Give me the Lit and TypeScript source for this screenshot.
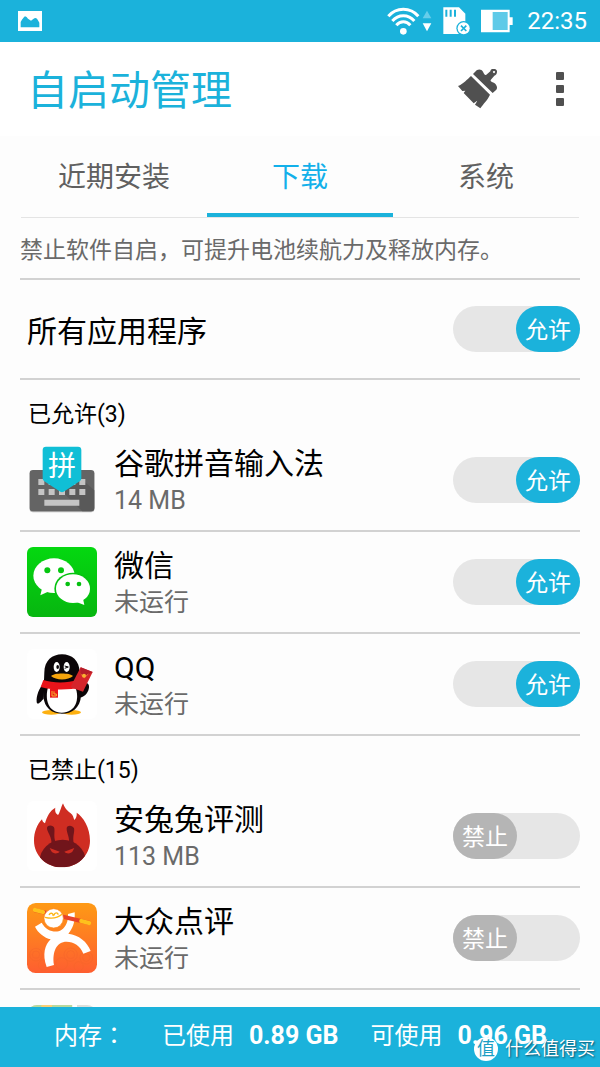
import { LitElement, html, svg, css, nothing } from 'lit';
import { customElement, property, state } from 'lit/decorators.js';

type IconName = 'ime' | 'wechat' | 'qq' | 'antutu' | 'dianping' | 'map';

interface AppEntry {
  id: string;
  name: string;
  status: string;
  icon: IconName;
  allowed: boolean;
}

const icons = {
  ime: svg`<svg viewBox="80 498 210 210" aria-hidden="true">
    <rect x="88" y="576" width="194" height="124" rx="10" fill="#b9b9b9"/>
    <rect x="88" y="573" width="194" height="124" rx="10" fill="#646464"/>
    <path d="M186 638 L243 600 L282 634 V687 a10 10 0 0 1-10 10 H246Z" fill="#595959"/>
    <g fill="#c4c4c4">
      <path d="M114 600h18v18h-18zM145 600h18v18h-18zM207 600h18v18h-18zM237 600h18v18h-18z"/>
      <path d="M114 630h18v18h-18zM145 630h18v18h-18zM176 630h18v18h-18zM207 630h18v18h-18zM237 630h18v18h-18z"/>
      <path d="M132 662h105v18H132z"/>
    </g>
    <path d="M137 503 H233 a10 10 0 0 1 10 10 V598 a10 10 0 0 1-5 9 L190 638 a10 10 0 0 1-10 0 L132 607 a10 10 0 0 1-5-9 V513 a10 10 0 0 1 10-10Z" fill="#10bfd6"/>
    <text x="185" y="590" text-anchor="middle" font-size="84" fill="#fff" font-family="'Noto Sans CJK SC', sans-serif">拼</text>
  </svg>`,
  wechat: svg`<svg viewBox="80 50 210 210" aria-hidden="true">
    <defs><linearGradient id="wx" x1="0" y1="0" x2="0" y2="1"><stop offset="0" stop-color="#04d810"/><stop offset="1" stop-color="#07b610"/></linearGradient></defs>
    <rect x="80" y="50" width="210" height="210" rx="18" fill="url(#wx)"/>
    <ellipse cx="161" cy="136" rx="62" ry="52" fill="#fff"/>
    <path d="M126 170 L120 195 L148 182Z" fill="#fff"/>
    <circle cx="141" cy="120" r="9" fill="#05c610"/><circle cx="182" cy="120" r="9" fill="#05c610"/>
    <ellipse cx="218" cy="175" rx="56" ry="48" fill="#05c310"/>
    <ellipse cx="218" cy="175" rx="51" ry="43" fill="#fff"/>
    <path d="M228 215 L252 224 L247 200Z" fill="#fff"/>
    <circle cx="202" cy="161" r="7" fill="#05c010"/><circle cx="236" cy="161" r="7" fill="#05c010"/>
  </svg>`,
  qq: svg`<svg viewBox="80 355 210 210" aria-hidden="true">
    <rect x="80" y="355" width="210" height="210" rx="20" fill="#fff"/>
    <ellipse cx="153" cy="545" rx="28" ry="7" fill="#fdb010"/><ellipse cx="214" cy="545" rx="28" ry="7" fill="#fdb010"/>
    <path d="M132 455 C116 473 107 496 109 514 C111 526 122 512 130 504Z" fill="#0b0608"/>
    <path d="M236 482 C252 476 249 460 258 456 C271 460 266 478 260 487 C253 497 242 502 236 500Z" fill="#0b0608"/>
    <path d="M132 425 C132 390 156 371 185 371 C214 371 238 390 238 425 C238 450 244 470 242 495 C240 532 214 549 185 549 C154 549 132 532 129 497 C127 474 132 452 132 425Z" fill="#0b0608"/>
    <path d="M144 466 H224 C240 505 226 546 184 546 C143 546 132 505 144 466Z" fill="#fff"/>
    <ellipse cx="169" cy="409" rx="9" ry="15" fill="#fff"/><ellipse cx="199" cy="409" rx="9" ry="15" fill="#fff"/>
    <ellipse cx="172" cy="409" rx="4" ry="6" fill="#0b0608"/>
    <path d="M193 406 L204 409 L193 413" stroke="#0b0608" stroke-width="3" fill="none"/>
    <path d="M152 436 C162 426 208 426 218 436 C204 450 166 450 152 436Z" fill="#f6a40c"/>
    <path d="M129 448 C158 458 205 458 230 447 L240 469 C208 480 148 478 121 469Z" fill="#e9141a"/>
    <path d="M149 474 H173 V501 H149Z" fill="#e9141a"/>
    <path d="M155 481 V496 H168 V490 H161 V482" stroke="#f8b62c" stroke-width="3" fill="none"/>
    <path d="M241 410 L277 424 L248 483 L210 470Z" fill="#d5252b"/>
    <path d="M241 410 L277 424 L254 437 L240 431Z" fill="#b51d2a"/>
    <path d="M241 430 L252 441 L264 430" stroke="#f6a92c" stroke-width="2" fill="none"/><circle cx="251" cy="435" r="6" fill="#f9b233"/>
  </svg>`,
  antutu: svg`<svg viewBox="80 183 210 210" aria-hidden="true">
    <rect x="80" y="183" width="210" height="210" rx="20" fill="#fff"/>
    <defs><clipPath id="flame"><path d="M185 382 C139 382 101 347 101 302 C101 276 110 254 125 238 C126 244 129 248 134 250 C140 228 150 211 165 203 C163 214 166 221 173 225 C178 221 181 204 188 190 C194 208 204 214 211 220 C219 226 219 234 222 240 C228 234 230 226 229 218 C248 230 269 262 269 302 C269 347 231 382 185 382Z"/></clipPath></defs>
    <g clip-path="url(#flame)">
      <rect x="95" y="185" width="180" height="200" fill="#cf2d22"/>
      <ellipse cx="187" cy="363" rx="69" ry="64" fill="#71151b"/>
      <path d="M153 316 C157 290 138 274 140 263 C142 254 160 255 162 265 C164 278 158 292 168 312ZM205 312 C210 292 198 280 199 264 C201 254 217 255 221 265 C224 276 215 290 221 313Z" fill="#71151b"/>
    </g>
    <path d="M148 324 L178 335 C172 342 159 342 153 334ZM222 324 L192 335 C198 342 211 342 217 334Z" fill="#cf2d22"/>
  </svg>`,
  dianping: svg`<svg viewBox="80 486 210 210" aria-hidden="true">
    <defs><linearGradient id="dp" x1="0" y1="0" x2="0" y2="1"><stop offset="0" stop-color="#fe9a15"/><stop offset="1" stop-color="#fe5e30"/></linearGradient></defs>
    <rect x="80" y="486" width="210" height="210" rx="26" fill="url(#dp)"/>
    <g fill="none" stroke="#f5652a" stroke-width="2" opacity="0.6">
      <circle cx="107" cy="641" r="19"/><circle cx="107" cy="641" r="11"/><circle cx="211" cy="641" r="20"/><circle cx="211" cy="641" r="12"/>
      <circle cx="258" cy="650" r="19"/><circle cx="258" cy="650" r="11"/><circle cx="184" cy="668" r="18"/><circle cx="130" cy="672" r="16"/><circle cx="235" cy="676" r="14"/>
    </g>
    <path d="M104 557 L124 545 C138 570 166 578 183 567 C198 557 204 540 203 519 L223 514 C225 543 217 563 204 578 C235 582 261 602 271 630 L249 638 C240 614 220 602 199 602 C168 602 155 633 161 672 L139 678 C125 640 134 611 151 595 C132 590 113 576 104 557Z" fill="#fff"/>
    <path d="M101 507 L268 546" stroke="#e8432a" stroke-width="12"/>
    <path d="M104 507 L128 513" stroke="#fec11c" stroke-width="13" stroke-linecap="round"/>
    <path d="M243 540 L266 546" stroke="#fec11c" stroke-width="13" stroke-linecap="round"/>
    <circle cx="160" cy="532" r="29" fill="#fff" stroke="#fe8a1c" stroke-width="2"/>
    <path d="M134 529 C150 533 170 533 185 520 M146 522 C151 513 160 517 158 525 M161 523 C163 513 173 514 173 521" fill="none" stroke="#fdb515" stroke-width="4"/>
  </svg>`,
  map: svg`<svg viewBox="0 0 210 210" aria-hidden="true">
    <defs><clipPath id="mapbox"><rect width="210" height="210" rx="30"/></clipPath></defs>
    <g clip-path="url(#mapbox)"><rect width="210" height="210" fill="#dedfda"/><path d="M0 0H136V90H0Z" fill="#b9d89c"/><path d="M43 0H75V210H43Z" fill="#fbcf74"/><path d="M136 0H150V210H136Z" fill="#fff"/></g>
  </svg>`,
};

@customElement('app-switch')
class AppSwitch extends LitElement {
  @property({ type: Boolean }) on = false;
  @property() name = '';

  static styles = css`
    :host { display: block; flex: none; }
    .track {
      display: grid;
      align-items: center;
      width: 127px;
      height: 46px;
      border-radius: 23px;
      background: #e6e6e6;
      cursor: pointer;
    }
    .box, .knob { grid-area: 1 / 1; }
    .box { appearance: none; width: 100%; height: 100%; margin: 0; border-radius: 23px; cursor: pointer; }
    .box:focus-visible { outline: 2px solid #1a8fb0; }
    .knob {
      justify-self: start;
      width: 64px;
      padding-top: 4px;
      border-radius: 23px;
      background: #b5b5b5;
      color: #fff;
      font-size: 23px;
      line-height: 42px;
      text-align: center;
      pointer-events: none;
    }
    .box:checked + .knob { justify-self: end; background: #1bb2db; }
  `;

  render() {
    return html`<label class="track">
      <input class="box" type="checkbox" role="switch" aria-label=${this.name} .checked=${this.on}
        @change=${(e: Event) => (this.on = (e.target as HTMLInputElement).checked)}>
      <span class="knob">${this.on ? '允许' : '禁止'}</span>
    </label>`;
  }
}

@customElement('app-root')
class AppRoot extends LitElement {
  @state() private tab = 1;

  private tabs = ['近期安装', '下载', '系统'];

  private groups: { title: string; apps: AppEntry[] }[] = [
    {
      title: '已允许(3)',
      apps: [
        { id: 'ime', name: '谷歌拼音输入法', status: '14 MB', icon: 'ime', allowed: true },
        { id: 'wechat', name: '微信', status: '未运行', icon: 'wechat', allowed: true },
        { id: 'qq', name: 'QQ', status: '未运行', icon: 'qq', allowed: true },
      ],
    },
    {
      title: '已禁止(15)',
      apps: [
        { id: 'antutu', name: '安兔兔评测', status: '113 MB', icon: 'antutu', allowed: false },
        { id: 'dianping', name: '大众点评', status: '未运行', icon: 'dianping', allowed: false },
        { id: 'map', name: '', status: '', icon: 'map', allowed: false },
      ],
    },
  ];

  static styles = css`
    :host {
      display: flex;
      flex-direction: column;
      height: 100vh;
      overflow: hidden;
      position: relative;
      background: #fdfdfd;
      color: #000;
      font-family: Roboto, 'Noto Sans CJK SC', sans-serif;
    }
    svg { display: block; }
    .status {
      flex: none;
      display: flex;
      align-items: center;
      height: 42px;
      padding: 0 13px 0 18px;
      background: #1bb2db;
      color: #fff;
      font-size: 24px;
    }
    .status-right { display: flex; align-items: center; gap: 11px; margin-left: auto; }
    .clock { padding-left: 3px; line-height: 42px; }
    .header {
      flex: none;
      display: flex;
      align-items: center;
      height: 94px;
      padding: 0 24px 0 27px;
      background: #fff;
    }
    .title { margin: 0; padding-top: 4px; font-size: 41px; font-weight: 400; line-height: 90px; color: #1bb2db; }
    .actions { display: flex; align-items: center; gap: 46px; margin-left: auto; }
    .icon-button { padding: 0; border: 0; background: none; cursor: pointer; }
    .tabs { flex: none; display: flex; margin: 0 21px; border-bottom: 1px solid #e4e4e4; }
    .tab {
      flex: 1 1 0;
      height: 81px;
      padding: 0;
      border: 0;
      border-bottom: 4px solid transparent;
      background: none;
      color: #606060;
      font: inherit;
      font-size: 28px;
      cursor: pointer;
    }
    .tab.active { color: #12b0ea; border-bottom-color: #1bb2db; }
    .list { flex: 1 1 0; min-height: 0; overflow-y: auto; scrollbar-width: none; padding: 0 20px; }
    .hint {
      margin: 0;
      padding-top: 6px;
      border-bottom: 2px solid #d2d2d2;
      color: #6a6a6a;
      font-size: 23px;
      line-height: 54px;
    }
    .row {
      display: flex;
      align-items: center;
      gap: 17px;
      height: 100px;
      padding-left: 7px;
      border-bottom: 2px solid #d2d2d2;
    }
    .row.all { height: 98px; }
    .row svg { flex: none; width: 70px; height: 70px; overflow: visible; }
    .info { flex: 1; min-width: 0; padding-top: 6px; }
    .name { font-size: 30px; line-height: 36px; }
    .state { color: #6a6a6a; font-size: 25px; line-height: 38px; }
    .group-title { margin: 0; padding: 19px 8px 0; font-size: 23px; font-weight: 400; line-height: 31px; }
    .footer {
      flex: none;
      display: flex;
      align-items: baseline;
      height: 60px;
      padding-left: 54px;
      background: #1bb2db;
      color: #fff;
      font-size: 24px;
      line-height: 58px;
      white-space: nowrap;
    }
    .used { margin-left: 36px; }
    .free { margin-left: 32px; }
    .colon { font-family: 'Noto Sans CJK TC', sans-serif; line-height: 1; }
    .value { margin-left: 15px; font-size: 25px; }
    .brand {
      position: absolute;
      right: 5px;
      bottom: 6px;
      display: flex;
      align-items: center;
      gap: 7px;
      color: #fff;
      font-size: 18px;
      line-height: 24px;
      text-shadow: 1px 1px 2px #0a4a60;
    }
    .seal {
      width: 24px;
      height: 24px;
      border-radius: 50%;
      background: #fff;
      color: #1a9ec4;
      text-align: center;
      text-shadow: none;
    }
  `;

  private renderApp(app: AppEntry) {
    return html`<div class="row">
      ${icons[app.icon]}
      ${app.name
        ? html`<div class="info"><div class="name">${app.name}</div><div class="state">${app.status}</div></div>
            <app-switch .name=${app.name} ?on=${app.allowed}></app-switch>`
        : nothing}
    </div>`;
  }

  render() {
    return html`
      <div class="status">
        <svg width="24" height="20" viewBox="54 31 72 60" aria-hidden="true">
          <path d="M54 31H126V91H54Z" fill="#fff"/><path d="M62 80 V64 Q70 50 75 47 Q80 48 84 54 L93 60 L101 54 Q106 50 111 54 Q115 60 118 66 V80Z" fill="#1bb2db"/>
        </svg>
        <div class="status-right">
          <svg width="45" height="28" viewBox="52 18 135 84" aria-hidden="true">
            <g fill="none" stroke="#fff" stroke-width="9">
              <path d="M56 46 C80 18 122 18 146 46"/><path d="M68 60 C86 39 116 39 134 60"/><path d="M80 73 C92 59 110 59 122 73"/>
            </g>
            <circle cx="101" cy="91" r="10" fill="#fff"/>
            <path d="M172 29 L185 52 H159Z" fill="#66cdea"/><path d="M172 91 L185 67 H159Z" fill="#fff"/>
          </svg>
          <svg width="27" height="28" viewBox="224 19 81 84" aria-hidden="true">
            <path d="M225 20 H272 L291 39 V100 H225Z" fill="#fff"/>
            <path d="M231 27h6v21h-6zM244 27h6v21h-6zM257 27h6v21h-6z" fill="#1bb2db"/>
            <circle cx="286" cy="83" r="22" fill="#1bb2db"/><circle cx="286" cy="83" r="18" fill="#fff"/>
            <path d="M278 75 L294 91 M294 75 L278 91" stroke="#1bb2db" stroke-width="5"/>
          </svg>
          <svg width="32" height="24" viewBox="337 27 96 72" aria-hidden="true">
            <path d="M337 29H423V52H432V75H423V97H337Z" fill="#fff"/><path d="M372 36H417V90H372Z" fill="#5fcae8"/>
          </svg>
          <span class="clock">22:35</span>
        </div>
      </div>

      <header class="header">
        <h1 class="title">自启动管理</h1>
        <div class="actions">
          <button class="icon-button" aria-label="清理">
            <svg width="40" height="40" viewBox="264 207 120 120" fill="#505050">
              <path d="M303 228 L360 284 C352 302 340 311 331 325 L315 314 L322 302 L311 310 L281 279 L286 272 L277 273 L264 258 C280 252 292 238 303 228Z"/>
              <path fill-rule="evenodd" d="M309 222 L320 211 C327 206 335 208 339 215 C342 222 345 227 349 224 L361 214 C362 204 378 204 381 213 C382 222 377 226 373 227 L362 240 C360 245 368 246 374 250 C381 256 383 264 379 269 L368 279Z M372 213 a3 3 0 1 0 .1 0Z"/>
            </svg>
          </button>
          <button class="icon-button" aria-label="更多">
            <svg width="32" height="40" viewBox="0 0 32 40" fill="#505050">
              <rect x="12" y="3" width="8" height="8" rx="1"/><rect x="12" y="16" width="8" height="8" rx="1"/><rect x="12" y="29" width="8" height="8" rx="1"/>
            </svg>
          </button>
        </div>
      </header>

      <div class="tabs" role="tablist">
        ${this.tabs.map(
          (label, i) => html`<button class="tab ${i === this.tab ? 'active' : ''}" role="tab"
            aria-selected=${i === this.tab} @click=${() => (this.tab = i)}>${label}</button>`
        )}
      </div>

      <main class="list">
        <p class="hint">禁止软件自启，可提升电池续航力及释放内存。</p>
        <div class="row all">
          <div class="info name">所有应用程序</div>
          <app-switch name="所有应用程序" on></app-switch>
        </div>
        ${this.groups.map(
          (g) => html`<section><h2 class="group-title">${g.title}</h2>${g.apps.map((a) => this.renderApp(a))}</section>`
        )}
      </main>

      <footer class="footer">
        <span>内存<span class="colon">：</span></span>
        <span class="used">已使用</span><strong class="value">0.89 GB</strong>
        <span class="free">可使用</span><strong class="value">0.96 GB</strong>
      </footer>
      <div class="brand"><span class="seal">值</span><span>什么值得买</span></div>
    `;
  }
}
